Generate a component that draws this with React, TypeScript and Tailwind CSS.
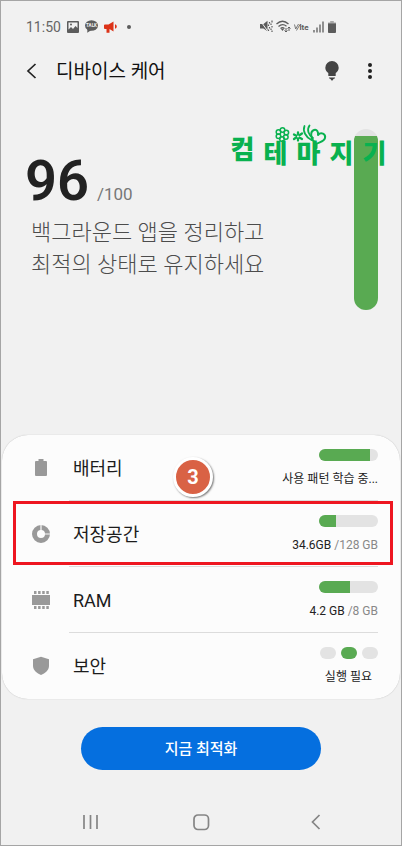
import type { ReactNode } from "react";

type MeterProps = {
  label: string;
  percent: number;
};

function Meter({ label, percent }: MeterProps) {
  return (
    <div
      role="meter"
      aria-label={label}
      aria-valuenow={percent}
      aria-valuemin={0}
      aria-valuemax={100}
      className="h-3 w-[59px] overflow-hidden rounded-full bg-[#e3e3e3]"
    >
      <div
        className="h-full bg-[#59aa52]"
        style={{ width: `${percent}%` }}
      />
    </div>
  );
}

type CareRowProps = {
  icon: ReactNode;
  title: string;
  highlighted?: boolean;
  last?: boolean;
  children: ReactNode;
};

function CareRow({
  icon,
  title,
  highlighted = false,
  last = false,
  children,
}: CareRowProps) {
  return (
    <li className="relative">
      <button
        type="button"
        className="flex h-[66px] w-full items-stretch pr-[22px] pl-[27px] text-left"
      >
        <span className="flex w-10 items-center">{icon}</span>
        <span
          className={`flex flex-1 items-center justify-between border-b pl-1 ${
            last ? "border-transparent" : "border-[#dcdcdc]"
          }`}
        >
          <span className="pt-[2px] text-lg text-[#1c1c1c]">{title}</span>
          <span className="flex flex-col items-end gap-[10px] text-xs leading-4 text-[#222222]">
            {children}
          </span>
        </span>
      </button>

      {highlighted && (
        <div className="pointer-events-none absolute top-0 right-[7px] left-[11px] h-16 border-3 border-[#ee1620]" />
      )}
    </li>
  );
}

function StatusBar() {
  return (
    <div className="flex h-[51px] items-center justify-between pr-[65px] pl-[25px] text-[#666666]">
      <div className="flex items-center gap-[6px]">
        <span className="text-[14px] leading-5">11:50</span>
        <svg width="12" height="12" viewBox="0 0 12 12" aria-hidden="true">
          <path
            fill="#5c5c5c"
            fillRule="evenodd"
            d="M1 0h10a1 1 0 0 1 1 1v10a1 1 0 0 1-1 1H1a1 1 0 0 1-1-1V1a1 1 0 0 1 1-1Zm.5 1.5v7L4 6l2 2 2.500-3L10.500 7V1.500Z"
          />
          <circle cx="4" cy="3.500" r="1" fill="#5c5c5c" />
        </svg>
        <svg width="13" height="13" viewBox="0 0 13 13" aria-hidden="true">
          <ellipse cx="6.500" cy="5.500" rx="6.500" ry="5.300" fill="#5c5c5c" />
          <path d="M2.500 8.500 2.200 12.800 6.500 10Z" fill="#5c5c5c" />
          <text
            x="6.500"
            y="7.300"
            textAnchor="middle"
            fontSize="4.500"
            fontWeight="700"
            fill="#f1f1f1"
          >
            TALK
          </text>
        </svg>
        <svg width="13" height="12" viewBox="0 0 13 12" aria-hidden="true">
          <path
            fill="#dc3318"
            d="M0 4.200Q0 3.500 1 3.500H4.500L9.500.500V10.500L5.500 8V11.800H2.500V8H1Q0 8 0 7.200ZM11 3.200Q12.800 3.700 12.800 5.500T11 7.800Z"
          />
        </svg>
        <span className="ml-1 size-1 rounded-full bg-[#5c5c5c]" />
      </div>

      <div className="flex items-center gap-[3px]">
        <svg width="13" height="13" viewBox="0 0 13 13" aria-hidden="true">
          <path
            fill="#5c5c5c"
            d="M0 4H3.500L7.500.800V11.200L3.500 8.500H0Z"
          />
          <path d="M.5 1 8 11.500" stroke="#f1f1f1" strokeWidth="1" />
          <path
            d="M9.500 2v1.500M8.500 4.500v1.500M9.500 7v1.500M8.500 9.500v1.500M12 .5v2M11 3.500v1.500M12 6v1.500M11 8.500v1.500M12 10.500v1.500"
            fill="none"
            stroke="#5c5c5c"
            strokeWidth="1.200"
          />
        </svg>
        <svg width="15" height="13" viewBox="0 0 15 13" aria-hidden="true">
          <path
            d="M.5 4Q6.500-1.500 12.500 4M2.500 6.500Q6.500 3 10.500 6.200M4.500 8.500Q6.500 7 8.500 8.500"
            fill="none"
            stroke="#5c5c5c"
            strokeWidth="1.300"
          />
          <path d="m5 9 1.500 2L8 9Z" fill="#5c5c5c" />
          <path
            d="M10 8v4M8.500 10.500 10 12l1.500-1.500M13 11V7M11.500 8.500 13 7l1.500 1.500"
            fill="none"
            stroke="#5c5c5c"
          />
        </svg>
        <svg width="16" height="12" viewBox="0 0 16 12" aria-hidden="true">
          <path
            d="m.5 3.500 1.200 4.500L4.500 3M2.500 9.500 6 3.500"
            fill="none"
            stroke="#6c6c6c"
            strokeWidth=".9"
          />
          <text x="5.500" y="9" fontSize="8" fontWeight="700" fill="#5c5c5c">
            lte
          </text>
        </svg>
        <svg width="11" height="12" viewBox="0 0 11 12" aria-hidden="true">
          <path
            d="M1 9v2.500M4 6.500v5M7 3.500v8M10 .500v11"
            stroke="#5c5c5c"
            strokeWidth="1.300"
          />
        </svg>
        <svg
          width="8"
          height="12"
          viewBox="0 0 9 12"
          preserveAspectRatio="none"
          className="ml-px"
          aria-hidden="true"
        >
          <path d="M2.500 0h4v1.500H9V3H0V1.500h2.500Z" fill="#a8a8a8" />
          <path d="M0 2.500h9V11a1 1 0 0 1-1 1H1a1 1 0 0 1-1-1Z" fill="#5c5c5c" />
        </svg>
      </div>
    </div>
  );
}

function Header() {
  return (
    <header className="flex h-[38px] items-center px-[25px]">
      <button type="button" aria-label="뒤로">
        <svg width="12" height="16" viewBox="0 0 12 16" aria-hidden="true">
          <path
            d="M9.500 1 2 8l7.500 7"
            fill="none"
            stroke="#222222"
            strokeWidth="1.700"
          />
        </svg>
      </button>
      <h1 className="ml-[18px] flex-1 pt-[2px] text-[19px] text-[#111111]">
        디바이스 케어
      </h1>
      <button type="button" aria-label="도움말" className="mr-[29px]">
        <svg width="14" height="20" viewBox="0 0 14 20" aria-hidden="true">
          <path
            fill="#444444"
            d="M7 0a6.700 6.700 0 0 1 6.700 6.700c0 2.300-1.200 4-3 5.300v2.500q0 .5-.5.5H3.800q-.5 0-.5-.5V12C1.500 10.700.3 9 .3 6.700A6.700 6.700 0 0 1 7 0ZM4 16.500h6v.7L8.500 18l-1 1.500h-1l-1-1.500L4 17.200Z"
          />
        </svg>
      </button>
      <button type="button" aria-label="더보기" className="mr-1">
        <svg width="4" height="16" viewBox="0 0 4 16" aria-hidden="true">
          <g fill="#222222">
            <circle cx="2" cy="2" r="2" />
            <circle cx="2" cy="8" r="2" />
            <circle cx="2" cy="14" r="2" />
          </g>
        </svg>
      </button>
    </header>
  );
}

function Watermark() {
  return (
    <div className="absolute top-[34px] right-[10px] text-[#09b14f]">
      <p className="grid grid-cols-[repeat(5,33px)] pt-[14px] text-center text-[26px] leading-8 font-black">
        <span className="-mt-1">컴</span>
        <span>테</span>
        <span>마</span>
        <span>지</span>
        <span>기</span>
      </p>
      <svg
        width="54"
        height="28"
        viewBox="0 0 54 28"
        className="absolute top-0 left-[49px]"
        fill="none"
        stroke="#09b14f"
        strokeLinecap="round"
        strokeLinejoin="round"
        aria-hidden="true"
      >
        <g strokeWidth="1.500">
          <circle cx="7.500" cy="6" r="2.300" />
          <circle cx="11.300" cy="8.500" r="2.300" />
          <circle cx="10.800" cy="13" r="2.300" />
          <circle cx="7" cy="15" r="2.300" />
          <circle cx="3.500" cy="12.300" r="2.300" />
          <circle cx="3.500" cy="8" r="2.300" />
          <path d="M8 17v8" strokeWidth="2" />
        </g>
        <path
          d="M23 8.500v8M19 10.500l8 4.500M27 9.500l-8 5.500"
          strokeWidth="2.300"
        />
        <circle cx="23" cy="12.500" r="1" fill="#f1f1f1" stroke="none" />
        <path
          d="M29.500 2C27.500 7 30.500 13 36.500 16M34.500 1.500C31.500 6 33.500 11 38 14"
          strokeWidth="1.800"
        />
        <path
          d="M41.500 20C35.500 15.500 34.500 7.500 39 6 42 5 43.500 8 43 11 46 7.500 51 10 50 14 49 18 44 18 41.500 20ZM41.500 20v4"
          strokeWidth="2"
        />
      </svg>
    </div>
  );
}

function ScorePanel() {
  return (
    <section className="relative flex h-[345px] items-start justify-between pr-[23px] pl-6 text-[#4c4c4c]">
      <div className="pt-[55px]">
        <p className="flex items-baseline gap-2">
          <strong className="text-[56px] leading-[72px] font-semibold text-[#222222]">
            96
          </strong>
          <span className="text-[17px] text-[#777777]">/100</span>
        </p>
        <p className="pl-[6px] text-[22px] leading-8 font-light">
          백그라운드 앱을 정리하고
          <br />
          최적의 상태로 유지하세요
        </p>
      </div>
      <div
        role="meter"
        aria-label="점수"
        aria-valuenow={96}
        aria-valuemin={0}
        aria-valuemax={100}
        className="mt-[39px] flex h-[181px] w-6 flex-col justify-end overflow-hidden rounded-full bg-[#e3e3e3]"
      >
        <div className="bg-[#59aa52]" style={{ height: "96%" }} />
      </div>
      <Watermark />
    </section>
  );
}

function BatteryIcon() {
  return (
    <svg width="24" height="20" viewBox="0 0 24 20" aria-hidden="true">
      <path
        fill="#999999"
        d="M9.500 1h5v2H17q1 0 1 1v13q0 1-1 1H7q-1 0-1-1V4q0-1 1-1h2.500Z"
      />
    </svg>
  );
}

function StorageIcon() {
  return (
    <svg width="24" height="20" viewBox="0 0 24 20" aria-hidden="true">
      <circle
        cx="12"
        cy="10"
        r="6.500"
        fill="none"
        stroke="#999999"
        strokeWidth="5"
      />
      <path d="M12 0v7.500M15 10h7" stroke="#fcfcfc" strokeWidth="1.200" />
    </svg>
  );
}

function RamIcon() {
  return (
    <svg width="24" height="20" viewBox="0 0 24 20" aria-hidden="true">
      <path d="M3 5h18v10H3Z" fill="#999999" />
      <path
        d="M5 2.500h14.800M5 17.500h14.800"
        stroke="#999999"
        strokeWidth="3"
        strokeDasharray="2.500 1.600"
      />
    </svg>
  );
}

function ShieldIcon() {
  return (
    <svg width="24" height="20" viewBox="0 0 24 20" aria-hidden="true">
      <path
        fill="#999999"
        d="M12 .800 20 3.300V10c0 4-4 7.500-8 9-4-1.500-8-5-8-9V3.300Z"
      />
    </svg>
  );
}

export default function App() {
  return (
    <main className="flex min-h-screen flex-col border border-[#a5a5a5] bg-[#f1f1f1] font-[Roboto,'Noto_Sans_CJK_KR',sans-serif]">
      <StatusBar />
      <Header />
      <ScorePanel />

      <section className="relative mx-px">
        <ul className="rounded-[26px] bg-[#fcfcfc] shadow-[0_0_1px_#aaaaaa]">
          <CareRow icon={<BatteryIcon />} title="배터리">
            <Meter label="배터리" percent={86} />
            <span>사용 패턴 학습 중...</span>
          </CareRow>
          <CareRow icon={<StorageIcon />} title="저장공간" highlighted>
            <Meter label="저장공간" percent={28} />
            <span>
              34.6GB <span className="text-[#888888]">/128 GB</span>
            </span>
          </CareRow>
          <CareRow icon={<RamIcon />} title="RAM">
            <Meter label="RAM" percent={52} />
            <span>
              4.2 GB <span className="text-[#888888]">/8 GB</span>
            </span>
          </CareRow>
          <CareRow icon={<ShieldIcon />} title="보안" last>
            <span className="flex gap-[5px]">
              <span className="h-3 w-4 rounded-full bg-[#e3e3e3]" />
              <span className="h-3 w-4 rounded-full bg-[#59aa52]" />
              <span className="h-3 w-4 rounded-full bg-[#e3e3e3]" />
            </span>
            <span className="pr-[6px]">실행 필요</span>
          </CareRow>
        </ul>
        <div className="absolute top-[22px] left-[171px] flex size-10 items-center justify-center rounded-full border-3 border-white bg-[#d96245] text-xl font-bold text-white shadow-[1px_1px_2px_#777777]">
          3
        </div>
      </section>

      <button
        type="button"
        className="mx-20 mt-7 h-[43px] rounded-full bg-[#056fdf] pt-[2px] text-[15px] font-medium text-white"
      >
        지금 최적화
      </button>

      <nav className="mt-auto flex h-[46px] items-center justify-between px-20">
        <button type="button" aria-label="최근 앱">
          <svg width="18" height="16" viewBox="0 0 18 16" aria-hidden="true">
            <path
              d="M3 1v14M9.500 1v14M16 1v14"
              stroke="#858585"
              strokeWidth="1.700"
            />
          </svg>
        </button>
        <button type="button" aria-label="홈">
          <svg width="18" height="18" viewBox="0 0 18 18" aria-hidden="true">
            <rect
              x="2"
              y="2"
              width="14.500"
              height="14.500"
              rx="4"
              fill="none"
              stroke="#858585"
              strokeWidth="1.700"
            />
          </svg>
        </button>
        <button type="button" aria-label="뒤로 가기">
          <svg width="18" height="16" viewBox="0 0 18 16" aria-hidden="true">
            <path
              d="M16.500 1 9.500 8l7 7"
              fill="none"
              stroke="#858585"
              strokeWidth="1.700"
            />
          </svg>
        </button>
      </nav>
    </main>
  );
}
